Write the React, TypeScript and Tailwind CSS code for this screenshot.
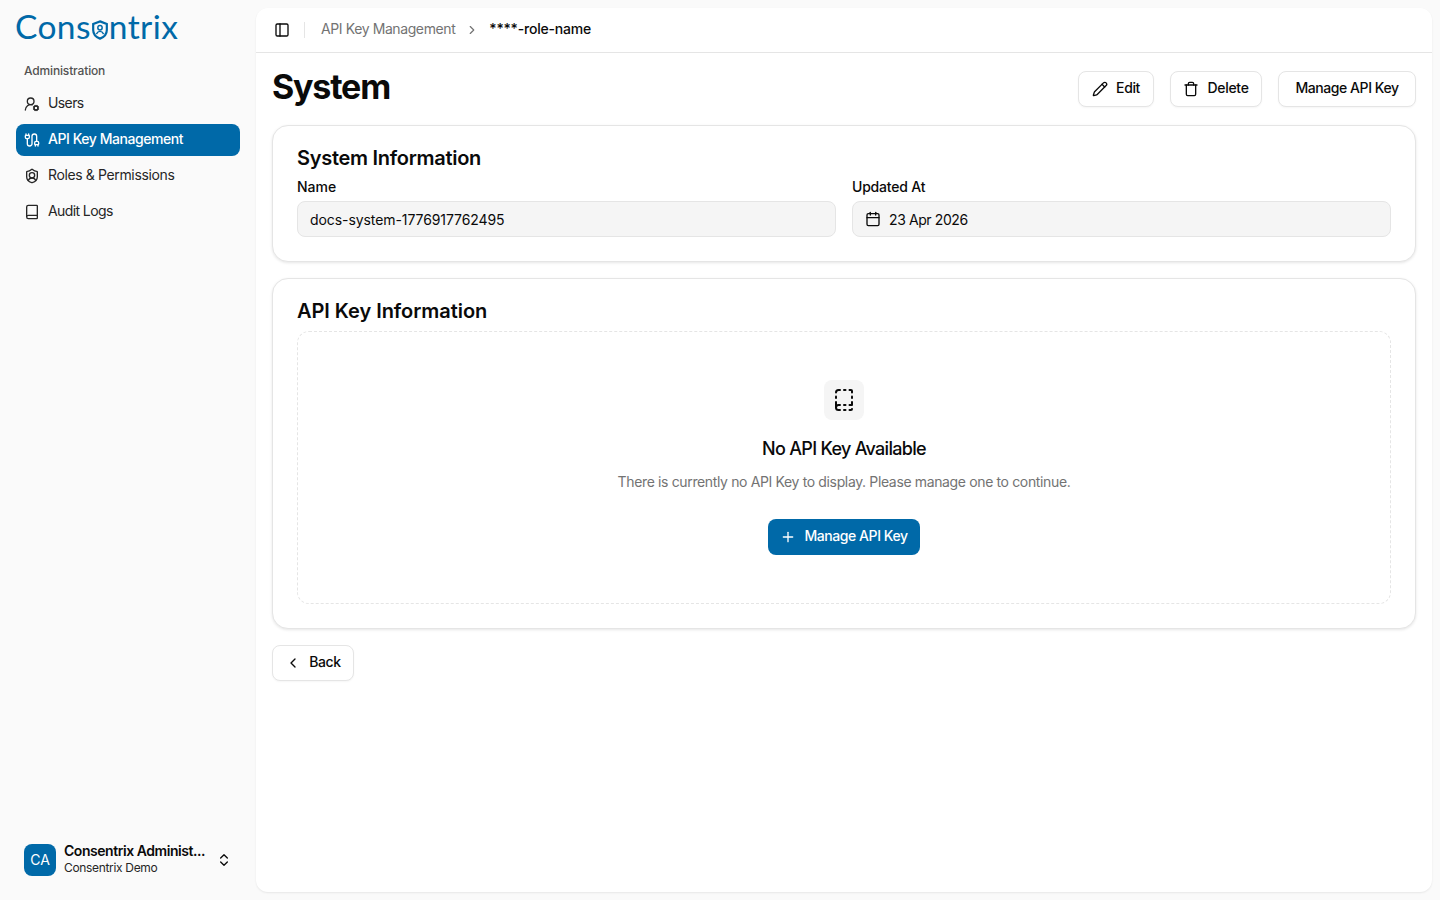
import { Book, BookDashed, Cable, Calendar, ChevronLeft, ChevronRight, ChevronsUpDown, PanelLeft, Pencil, Plus, ShieldUser, Trash, UserRoundCog } from "lucide-react";

const nav = [
  { label: "Users", Icon: UserRoundCog, track: "tracking-[-0.6px]" },
  { label: "API Key Management", Icon: Cable, active: true, track: "tracking-[-0.45px]" },
  { label: "Roles & Permissions", Icon: ShieldUser, track: "tracking-[-0.37px]" },
  { label: "Audit Logs", Icon: Book, track: "tracking-[-0.6px]" },
];

function Logo() {
  return (
    <div className="flex items-center h-[32px] text-[#0069a8] text-[33.5px] leading-none font-['Lato',sans-serif] font-normal tracking-[0.4px]">
      <span>Cons</span>
      <svg width="18" height="20" viewBox="0 0 19 22" fill="none" stroke="#0069a8" strokeWidth="2.4" className="mt-[6px]">
        <path d="M9.5 1.5 17 4.5V11c0 5-3.5 8-7.5 9.5C5.5 19 2 16 2 11V4.5Z" />
        <circle cx="9.5" cy="8.5" r="2.4" strokeWidth="1.6" />
        <path d="M5.5 15.5c1-2 2.3-3 4-3s3 1 4 3" strokeWidth="1.6" />
      </svg>
      <span>ntrix</span>
    </div>
  );
}

function OutlineButton({ children }: { children: React.ReactNode }) {
  return (
    <button className="h-9 flex items-center justify-center gap-2 rounded-lg border border-[#e5e5e5] bg-white text-[14px] font-medium text-[#0a0a0a] shadow-[0_1px_2px_rgba(0,0,0,0.04)]">
      {children}
    </button>
  );
}

function Card({ children, className }: { children: React.ReactNode; className: string }) {
  return (
    <section className={`rounded-2xl border border-[#e5e5e5] bg-white px-6 shadow-[0_1px_3px_rgba(0,0,0,0.1)] ${className}`}>
      {children}
    </section>
  );
}

export default function App() {
  return (
    <div className="flex h-[900px] w-[1440px] overflow-hidden bg-[#fafafa] text-[#0a0a0a] font-['Inter',sans-serif]">
      <aside className="flex w-[256px] shrink-0 flex-col">
        <div className="pl-[15px] pt-[11px]">
          <Logo />
        </div>
        <div className="mt-[12px] px-4">
          <div className="flex h-8 items-center px-2 text-[12px] font-medium tracking-[-0.15px] text-[#525252]">Administration</div>
          <nav className="mt-px flex flex-col gap-1">
            {nav.map(({ label, Icon, active, track }) => (
              <a
                key={label}
                className={`flex h-8 items-center gap-2 rounded-lg px-2 text-[14px] ${active ? "bg-[#0069a8] font-medium text-white" : "text-[#262626]"}`}
              >
                <Icon size={16} strokeWidth={2} />
                <span className={`pb-1 ${track}`}>{label}</span>
              </a>
            ))}
          </nav>
        </div>
        <div className="mt-auto mb-[16px] flex h-12 items-center gap-2 px-6">
          <div className="flex size-8 shrink-0 items-center justify-center rounded-lg bg-[#0069a8] pb-0.5 text-[14px] text-white">CA</div>
          <div className="min-w-0 flex-1 pb-0.5 leading-none">
            <div className="whitespace-nowrap text-[14px] font-semibold leading-[18px] tracking-[-0.45px]">Consentrix Administ...</div>
            <div className="text-[12px] leading-[16px] tracking-[-0.33px] text-[#262626]">Consentrix Demo</div>
          </div>
          <ChevronsUpDown size={16} />
        </div>
      </aside>

      <main className="my-2 mr-2 flex flex-1 flex-col rounded-xl bg-white shadow-[0_1px_2px_rgba(0,0,0,0.08)]">
        <header className="flex h-[45px] shrink-0 items-center border-b border-[#e5e5e5] pl-[18px]">
          <PanelLeft size={16} />
          <div className="ml-[14px] mr-[16px] h-4 w-px bg-[#e5e5e5]" />
          <span className="pb-1 text-[14px] tracking-[-0.4px] text-[#737373]">API Key Management</span>
          <ChevronRight size={14} className="mx-[10px] text-[#737373]" />
          <span className="pb-1 text-[14px] font-medium tracking-[-0.2px]">****-role-name</span>
        </header>

        <div className="flex flex-col gap-4 px-4 pt-[18px]">
          <div className="flex h-[38px] items-start justify-between">
            <h1 className="text-[34px] font-bold leading-[32px] tracking-[-1.2px]">System</h1>
            <div className="flex gap-4">
              <OutlineButton>
                <span className="flex w-[74px] items-center justify-center gap-[8px]"><Pencil size={16} /><span className="pb-1 tracking-[-0.4px]">Edit</span></span>
              </OutlineButton>
              <OutlineButton>
                <span className="flex w-[90px] items-center justify-center gap-[8px]"><Trash size={16} /><span className="pb-1 tracking-[-0.3px]">Delete</span></span>
              </OutlineButton>
              <OutlineButton>
                <span className="flex w-[136px] items-center justify-center pb-1 tracking-[-0.43px]">Manage API Key</span>
              </OutlineButton>
            </div>
          </div>

          <Card className="h-[137px] pt-[18px]">
            <h2 className="text-[20px] font-semibold leading-7 tracking-[-0.28px]">System Information</h2>
            <div className="mt-[6px] grid grid-cols-2 gap-4">
              <div>
                <div className="text-[14px] font-medium leading-[18px]">Name</div>
                <div className="mt-[5px] flex h-9 items-center rounded-lg border border-[#e5e5e5] bg-[#f5f5f5] px-3 text-[14px] tracking-[-0.08px]">docs-system-1776917762495</div>
              </div>
              <div>
                <div className="text-[14px] font-medium leading-[18px] tracking-[-0.2px]">Updated At</div>
                <div className="mt-[5px] flex h-9 items-center gap-2 rounded-lg border border-[#e5e5e5] bg-[#f5f5f5] px-3 text-[14px]">
                  <Calendar size={16} />
                  <span className="tracking-[-0.4px]">23 Apr 2026</span>
                </div>
              </div>
            </div>
          </Card>

          <Card className="h-[351px] pt-[18px]">
            <h2 className="text-[20px] font-semibold leading-7 tracking-[-0.05px]">API Key Information</h2>
            <div className="mt-[6px] flex h-[273px] flex-col items-center rounded-xl border border-dashed border-[#e5e5e5] pt-[48px]">
              <div className="flex size-10 items-center justify-center rounded-lg bg-[#f5f5f5]">
                <BookDashed size={24} />
              </div>
              <h3 className="mt-[15px] text-[18px] font-medium leading-7 tracking-[-0.7px]">No API Key Available</h3>
              <p className="mt-[9px] text-[14px] leading-5 tracking-[-0.36px] text-[#737373]">There is currently no API Key to display. Please manage one to continue.</p>
              <button className="mt-[27px] flex h-9 w-[152px] items-center justify-center gap-2 rounded-lg bg-[#0069a8] text-[14px] font-medium text-white">
                <Plus size={16} />
                <span className="pb-1 tracking-[-0.43px]">Manage API Key</span>
              </button>
            </div>
          </Card>

          <div className="w-[82px]">
            <OutlineButton>
              <span className="flex w-[80px] items-center justify-center gap-[8px]"><ChevronLeft size={16} /><span className="pb-1 tracking-[-0.4px]">Back</span></span>
            </OutlineButton>
          </div>
        </div>
      </main>
    </div>
  );
}
